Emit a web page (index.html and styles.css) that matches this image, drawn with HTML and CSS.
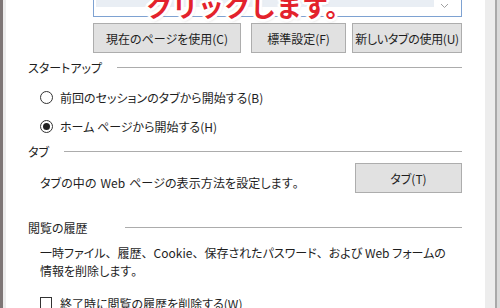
FILE: index.html
```html
<!DOCTYPE html>
<html lang="ja">
  <head>
    <meta charset="UTF-8" />
    <title>インターネット オプション</title>
    <link rel="stylesheet" href="styles.css">
  </head>
  <body>
    <div class="dialog">
      <div class="edge-left"></div>
      <div class="panel">
        <div class="combo">
          <div class="combo-sel"></div>
          <svg class="combo-arrow" width="9" height="6" viewBox="0 0 9 6">
            <path d="M1 1 L4.5 4.5 L8 1" fill="none" stroke="#a0a0a0" stroke-width="1" />
          </svg>
        </div>
        <div class="note">クリックします。</div>

        <div class="home-buttons">
          <button class="btn btn-current">現在のページを使用(C)</button>
          <button class="btn btn-default">標準設定(F)</button>
          <button class="btn btn-newtab">新しいタブの使用(U)</button>
        </div>

        <div class="group-head">
          <span>スタートアップ</span>
          <div class="rule"></div>
        </div>
        <label class="option option-first">
          <span class="radio"></span>
          前回のセッションのタブから開始する(B)
        </label>
        <label class="option option-second">
          <span class="radio checked"></span>
          ホーム ページから開始する(H)
        </label>

        <div class="group-head group-tabs">
          <span>タブ</span>
          <div class="rule"></div>
        </div>
        <div class="tabs-row">
          <p class="tabs-text">タブの中の Web ページの表示方法を設定します<span class="fw">。</span></p>
          <button class="btn btn-tabs">タブ(T)</button>
        </div>

        <div class="group-head group-history">
          <span>閲覧の履歴</span>
          <div class="rule rule-wide"></div>
        </div>
        <p class="history-text">
          一時ファイル<span class="fw">、</span>履歴<span class="fw">、</span>Cookie<span class="fw">、</span>保存されたパスワード<span class="fw">、</span>および Web フォームの<br />
          情報を削除します<span class="fw">。</span>
        </p>
        <label class="option option-check">
          <span class="checkbox"></span>
          終了時に閲覧の履歴を削除する(W)
        </label>
      </div>
      <div class="scroll">
        <div class="scroll-track"></div>
        <div class="scroll-line"></div>
        <div class="scroll-out"></div>
      </div>
    </div>
  </body>
</html>
```

FILE: styles.css
```css
body {
  margin: 0;
  width: 500px;
  height: 308px;
  overflow: hidden;
  background: #fff;
  font-family: "Noto Sans CJK JP", "Noto Sans", sans-serif;
  font-size: 12px;
  color: #1e1e1e;
  font-feature-settings: "palt";
}
.fw {
  font-feature-settings: normal;
}
.dialog {
  display: flex;
  height: 308px;
}
.edge-left {
  width: 3px;
  background: #7e7676;
  border-right: 3px solid #ececec;
}
.panel {
  position: relative;
  flex: 1;
  padding: 0 23px 0 22px;
}
.combo {
  position: relative;
  margin-left: 65px;
  width: 367px;
  height: 16px;
  border: 1px solid #7ea2d2;
  border-top: none;
}
.combo-sel {
  margin-left: 2px;
  width: 338px;
  height: 7px;
  background: #e9eef4;
}
.combo-arrow {
  position: absolute;
  right: 12px;
  top: 3px;
}
.note {
  position: absolute;
  left: 140px;
  top: -12px;
  font-size: 26px;
  font-weight: 700;
  line-height: 36px;
  color: #e3222c;
  font-feature-settings: normal;
  text-shadow:
    2px 0 0 #fff, -2px 0 0 #fff, 0 2px 0 #fff, 0 -2px 0 #fff,
    2px 2px 0 #fff, -2px 2px 0 #fff, 2px -2px 0 #fff, -2px -2px 0 #fff,
    3px 0 1px #fff, -3px 0 1px #fff, 0 3px 1px #fff, 0 -3px 1px #fff,
    1px 2px 3px rgba(0, 0, 0, 0.25);
}
.btn {
  height: 30px;
  padding: 0;
  background: #e1e1e1;
  border: 1px solid #adadad;
  border-radius: 0;
  font-family: inherit;
  font-size: 12px;
  font-feature-settings: "palt";
  color: #1e1e1e;
}
.home-buttons {
  display: flex;
  margin-top: 6px;
  margin-left: 65px;
}
.btn-current {
  width: 148px;
}
.btn-default {
  width: 95px;
  margin-left: 10px;
}
.btn-newtab {
  width: 110px;
  margin-left: 6px;
  letter-spacing: -0.3px;
}
.group-head {
  display: flex;
  align-items: center;
  height: 18px;
  margin-top: 5px;
}
.rule {
  flex: 1;
  height: 1px;
  margin-left: 15px;
  background: #acacac;
}
.rule-wide {
  margin-left: 37px;
}
.group-tabs {
  margin-top: 7px;
}
.group-history {
  margin-top: 25px;
}
.option {
  display: flex;
  align-items: center;
  height: 18px;
  margin-left: 12px;
}
.option-first {
  margin-top: 12px;
}
.option-second {
  margin-top: 11px;
}
.option-check {
  margin-top: 14px;
}
.radio {
  box-sizing: border-box;
  width: 13px;
  height: 13px;
  margin-right: 7px;
  border: 1px solid #333;
  border-radius: 50%;
  display: flex;
  align-items: center;
  justify-content: center;
}
.radio.checked::after {
  content: "";
  width: 7px;
  height: 7px;
  border-radius: 50%;
  background: #222;
}
.checkbox {
  box-sizing: border-box;
  width: 12px;
  height: 12px;
  margin-right: 8px;
  border: 1px solid #333;
}
.tabs-row {
  display: flex;
  align-items: flex-start;
  margin-top: 3px;
}
.tabs-text {
  flex: 1;
  margin: 11px 0 0 12px;
  line-height: 18px;
  word-spacing: 1px;
  letter-spacing: 0.1px;
}
.btn-tabs {
  width: 107px;
}
.history-text {
  margin: 8px 0 0 12px;
  line-height: 18px;
}
.scroll {
  display: flex;
  width: 15px;
}
.scroll-track {
  width: 10px;
  background: #ededed;
}
.scroll-line {
  width: 2px;
  background: #a9a9a9;
}
.scroll-out {
  flex: 1;
  background: #dadada;
}
```
